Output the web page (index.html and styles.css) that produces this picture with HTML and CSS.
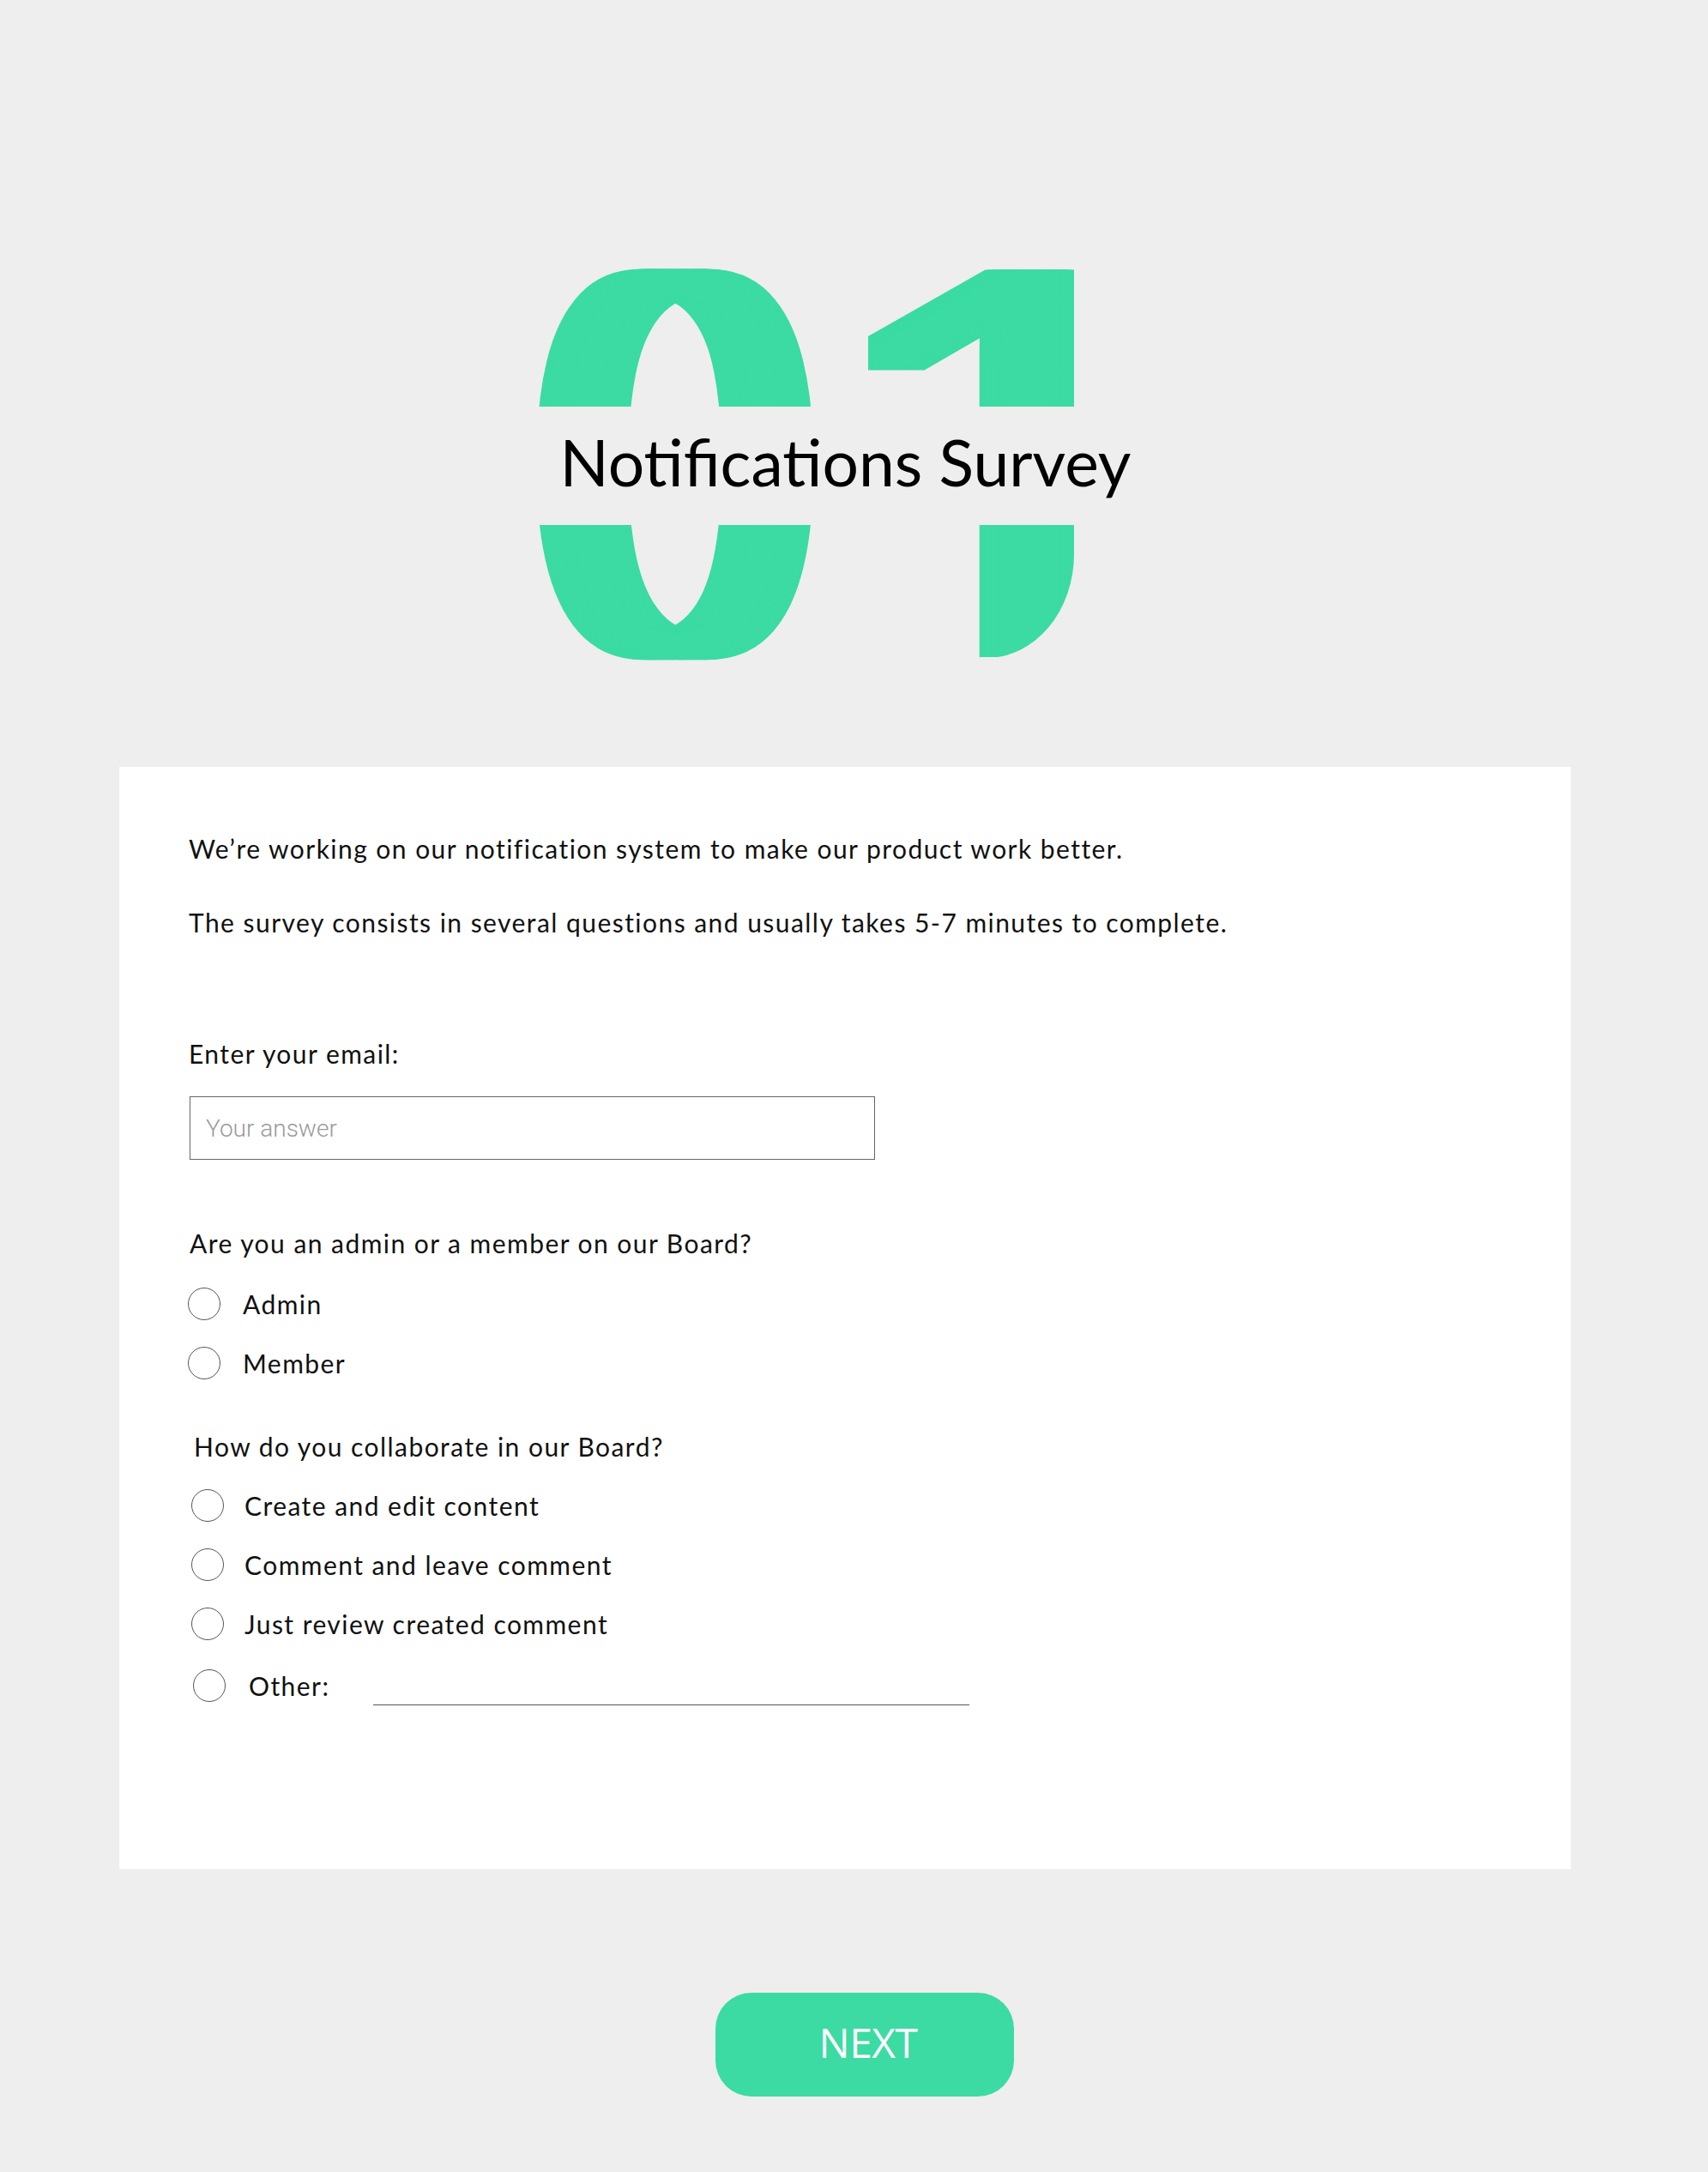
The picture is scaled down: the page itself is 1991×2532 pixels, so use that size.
FILE: index.html
```html
<!DOCTYPE html>
<html lang="en">
<head>
<meta charset="utf-8">
<title>Notifications Survey</title>
<link rel="stylesheet" href="styles.css">
</head>
<body>
<div class="page">
  <header class="hero">
    <div class="numeral" aria-hidden="true"><span class="digit zero">0</span><span class="one-clip"><span class="digit one">1</span></span></div>
    <div class="band"><h1 class="title">Notifications Survey</h1></div>
  </header>

  <main class="card">
    <div class="intro">
      <p class="text">We’re working on our notification system to make our product work better.</p>
      <p class="text second">The survey consists in several questions and usually takes 5-7 minutes to complete.</p>
    </div>

    <section class="field">
      <label class="text" for="email">Enter your email:</label>
      <input class="answer" id="email" type="text" placeholder="Your answer">
    </section>

    <section class="question q-role">
      <p class="text">Are you an admin or a member on our Board?</p>
      <div class="options">
        <label class="option"><span class="radio"></span><span class="text">Admin</span></label>
        <label class="option"><span class="radio"></span><span class="text">Member</span></label>
      </div>
    </section>

    <section class="question q-collab">
      <p class="text">How do you collaborate in our Board?</p>
      <div class="options">
        <label class="option"><span class="radio"></span><span class="text">Create and edit content</span></label>
        <label class="option"><span class="radio"></span><span class="text">Comment and leave comment</span></label>
        <label class="option"><span class="radio"></span><span class="text">Just review created comment</span></label>
        <label class="option other"><span class="radio"></span><span class="text other-label">Other:</span><span class="other-line"></span></label>
      </div>
    </section>
  </main>

  <div class="actions"><button class="next" type="button">NEXT</button></div>
</div>
</body>
</html>
```

FILE: styles.css
```css
* { box-sizing: border-box; }
html, body { margin: 0; padding: 0; }
body {
  background: #eeeeee;
  font-family: "Lato", "Open Sans", sans-serif;
  color: #111;
}
.page { width: 1991px; min-height: 2532px; }

.hero {
  position: relative;
  height: 894px;
}
.numeral {
  display: flex;
  align-items: flex-start;
  padding-top: 213px;
  padding-left: 587px;
  font-family: "Noto Sans", sans-serif;
  font-weight: 300;
  font-stretch: 68%;
  font-size: 620px;
  line-height: 620px;
  color: #3bdba3;
}
.digit { display: block; }
.zero {
  width: 400px;
  text-align: center;
  transform: scaleX(0.867);
  transform-origin: 50% 0;
  text-shadow:
    4px 0 0 #3bdba3, -4px 0 0 #3bdba3,
    8px 0 0 #3bdba3, -8px 0 0 #3bdba3,
    12px 0 0 #3bdba3, -12px 0 0 #3bdba3,
    16px 0 0 #3bdba3, -16px 0 0 #3bdba3,
    20px 0 0 #3bdba3, -20px 0 0 #3bdba3,
    24px 0 0 #3bdba3, -24px 0 0 #3bdba3,
    28px 0 0 #3bdba3, -28px 0 0 #3bdba3,
    32px 0 0 #3bdba3, -32px 0 0 #3bdba3,
    36px 0 0 #3bdba3, -36px 0 0 #3bdba3,
    40px 0 0 #3bdba3, -40px 0 0 #3bdba3,
    44px 0 0 #3bdba3, -44px 0 0 #3bdba3;
}
.one-clip {
  display: flex;
  justify-content: flex-end;
  width: 240px;
  height: 554px;
  margin-left: 25px;
  overflow: hidden;
  border-bottom-right-radius: 102px 121px;
}
.one {
  flex: none;
  margin-top: 3px;
  margin-right: -114px;
  transform: scaleX(1.35) scaleY(1.02);
  transform-origin: calc(100% - 144px) 551px;
  text-shadow:
    2px 0 0 #3bdba3, -2px 0 0 #3bdba3,
    4px 0 0 #3bdba3, -4px 0 0 #3bdba3,
    6px 0 0 #3bdba3, -6px 0 0 #3bdba3,
    8px 0 0 #3bdba3, -8px 0 0 #3bdba3,
    10px 0 0 #3bdba3, -10px 0 0 #3bdba3,
    12px 0 0 #3bdba3, -12px 0 0 #3bdba3,
    14px 0 0 #3bdba3, -14px 0 0 #3bdba3,
    16px 0 0 #3bdba3, -16px 0 0 #3bdba3,
    18px 0 0 #3bdba3, -18px 0 0 #3bdba3,
    20px 0 0 #3bdba3, -20px 0 0 #3bdba3,
    22px 0 0 #3bdba3, -22px 0 0 #3bdba3,
    24px 0 0 #3bdba3, -24px 0 0 #3bdba3;
}

.band {
  position: absolute;
  left: 0;
  right: 0;
  top: 474px;
  height: 138px;
  background: #eeeeee;
  display: flex;
  justify-content: center;
  padding-top: 19px;
  padding-right: 20px;
}
.title {
  margin: 0;
  font-family: "Lato", sans-serif;
  font-weight: 400;
  font-size: 75px;
  line-height: 90px;
  color: #000;
}

.card {
  margin-left: 139px;
  width: 1692px;
  height: 1285px;
  background: #fff;
  padding: 78px 0 0 81px;
}
.text {
  display: block;
  margin: 0;
  font-size: 30px;
  line-height: 34px;
  letter-spacing: 1.45px;
  color: #111;
}
.intro .second { margin-top: 52px; }

.field { margin-top: 119px; }
.answer {
  display: block;
  margin-top: 33px;
  margin-left: 1px;
  width: 799px;
  height: 74px;
  border: 1.5px solid #666;
  border-radius: 0;
  padding: 0 0 0 18px;
  font-family: "Roboto", sans-serif;
  font-weight: 300;
  font-size: 28px;
  color: #333;
  background: #fff;
  outline: none;
}
.answer::placeholder { color: #9a9a9a; }

.question { margin-top: 80px; }
.q-role .text { margin-left: 1px; }
.options {
  display: flex;
  flex-direction: column;
  gap: 31px;
  margin-top: 35px;
}
.q-role .options .text { margin-left: 0; }
.option {
  display: flex;
  align-items: center;
  height: 38px;
}
.radio {
  flex: none;
  width: 38px;
  height: 38px;
  border: 1px solid #555;
  border-radius: 50%;
  margin-left: -1px;
  margin-right: 26px;
}
.q-collab { margin-top: 61px; padding-left: 6px; }
.q-collab .options { margin-top: 33px; }
.q-collab .option .radio { margin-left: -3px; margin-right: 24px; }
.option.other { margin-top: 3px; }
.q-collab .option.other .radio { margin-left: -1px; margin-right: 27px; }
.other-label { flex: none; width: 145px; }
.other-line {
  display: block;
  flex: none;
  width: 695px;
  height: 1px;
  background: #555;
  align-self: flex-end;
  margin-bottom: -4px;
}

.actions { padding: 144px 0 88px 834px; }
.next {
  display: block;
  width: 348px;
  height: 121px;
  border: none;
  border-radius: 42px;
  background: #3bdba3;
  color: #fff;
  font-family: "Open Sans", sans-serif;
  font-size: 48px;
  letter-spacing: -0.5px;
  line-height: 1;
  padding: 0 0 5px 8px;
  cursor: pointer;
}
```
